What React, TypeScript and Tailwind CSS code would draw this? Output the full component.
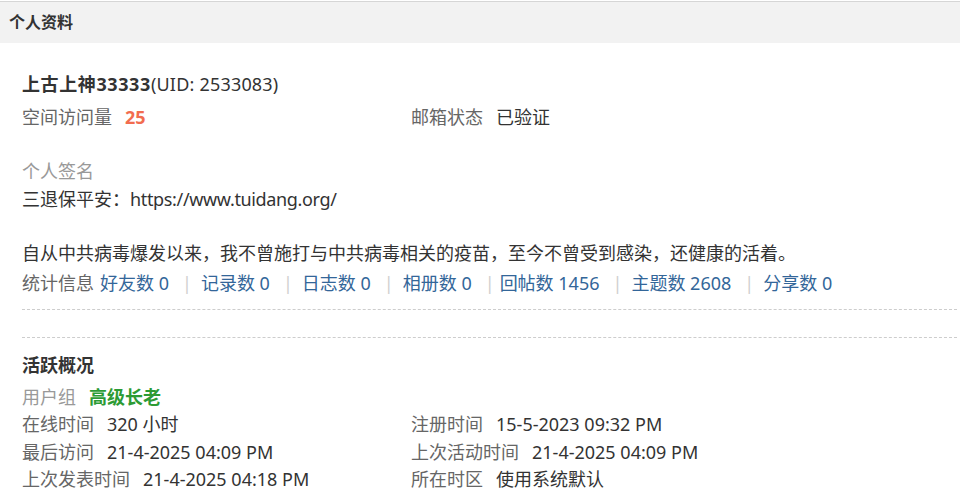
import React from 'react';

const font = { fontFamily: '"Noto Sans", "Noto Sans CJK SC", sans-serif' };

const stats: { label: string; value: string; pipeGap?: string }[] = [
  { label: '好友数', value: '0' },
  { label: '记录数', value: '0' },
  { label: '日志数', value: '0' },
  { label: '相册数', value: '0' },
  { label: '回帖数', value: '1456', pipeGap: 'tight' },
  { label: '主题数', value: '2608' },
  { label: '分享数', value: '0' },
];

const Field: React.FC<{ label: string; children: React.ReactNode; labelClass?: string }> = ({
  label,
  children,
  labelClass = 'text-[#666]',
}) => (
  <div className="flex items-center">
    <em className={`not-italic mr-[13px] ${labelClass}`}>{label}</em>
    <span className="text-[#333]">{children}</span>
  </div>
);

const App: React.FC = () => {
  return (
    <div className="w-[960px] h-[504px] bg-white overflow-hidden text-[18px] leading-[27.5px]" style={font}>
      <div className="mt-px border-t border-[#d6d6d6] bg-[#f2f2f2] h-[42px] flex items-center px-[9px]">
        <h2 className="text-[16px] font-bold text-[#333]">个人资料</h2>
      </div>

      <div className="pl-[22px] pr-[3px]">
        <div className="pt-[28px] pb-[12px] border-b border-dashed border-[#cdcdcd]">
          <h2 className="text-[#333]">
            <span className="font-bold tracking-[0.6px]">上古上神33333</span>
            <span className="tracking-[0.2px]">(UID: 2533083)</span>
          </h2>
          <div className="mt-[5px] flex">
            <div className="w-[389px]">
              <Field label="空间访问量">
                <strong className="text-[#f26c4f] font-bold">25</strong>
              </Field>
            </div>
            <div className="flex-1">
              <Field label="邮箱状态">已验证</Field>
            </div>
          </div>

          <div className="mt-[27px]">
            <div className="text-[#999]">个人签名</div>
            <div className="text-[#333]">
              三退保平安：<span className="tracking-[-0.35px]">https://www.tuidang.org/</span>
            </div>
            <div className="h-[27px]" />
            <div className="text-[#333]">
              自从中共病毒爆发以来，我不曾施打与中共病毒相关的疫苗，至今不曾受到感染，还健康的活着。
            </div>
          </div>

          <div className="mt-[2px] flex items-center">
            <em className="not-italic text-[#666] mr-[6px]">统计信息</em>
            {stats.map((s, i) => (
              <React.Fragment key={s.label}>
                {i > 0 && (
                  <span
                    className={`text-[#d0d0d0] ${s.pipeGap === 'tight' ? 'ml-[13px] mr-[5px]' : 'ml-[13px] mr-[9px]'}`}
                  >
                    |
                  </span>
                )}
                <a href="#" className="text-[#336699]">
                  {s.label} {s.value}
                </a>
              </React.Fragment>
            ))}
          </div>
        </div>

        <div className="h-[28px] border-b border-dashed border-[#cdcdcd]" />

        <div className="pt-[14px]">
          <h2 className="font-bold text-[#333]">活跃概况</h2>
          <div className="mt-[4px]">
            <Field label="用户组" labelClass="text-[#999]">
              <span className="font-bold text-[#2c9b34]">高级长老</span>
            </Field>
          </div>
          <div className="flex">
            <div className="w-[389px]">
              <Field label="在线时间">320 小时</Field>
              <Field label="最后访问">21-4-2025 04:09 PM</Field>
              <Field label="上次发表时间">21-4-2025 04:18 PM</Field>
            </div>
            <div className="flex-1">
              <Field label="注册时间">15-5-2023 09:32 PM</Field>
              <Field label="上次活动时间">21-4-2025 04:09 PM</Field>
              <Field label="所在时区">使用系统默认</Field>
            </div>
          </div>
        </div>
      </div>
    </div>
  );
};

export default App;
